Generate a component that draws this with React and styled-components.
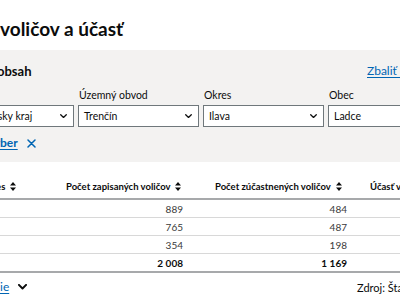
import React from 'react';
import styled, { createGlobalStyle } from 'styled-components';

const GlobalStyle = createGlobalStyle`
  html, body {
    margin: 0;
    padding: 0;
    overflow: hidden;
    background: #fff;
  }
  body {
    font-family: Lato, 'Noto Sans', sans-serif;
    color: #0b0c0c;
  }
`;

const Page = styled.div`
  width: 640px;
`;

// keeps the start of a word off-screen to the left, as the crop does
const Cut = styled.span`
  display: inline-flex;
  justify-content: flex-end;
  width: 0;
  white-space: pre;
`;

const Title = styled.h1`
  margin: 17px 0 9px;
  font-size: 19px;
  line-height: 24px;
  font-weight: 700;
`;

const Panel = styled.section`
  background: #f3f2f1;
  padding: 13px 0 11px;
`;

const PanelHead = styled.div`
  display: grid;
  grid-template-columns: 367px auto;
  align-items: center;
  height: 16px;
`;

const PanelTitle = styled.h2`
  margin: 0 0 0 -3px;
  font-size: 13px;
  line-height: 16px;
  font-weight: 700;
`;

const TextLink = styled.a`
  color: #0065b3;
  text-decoration: underline;
  text-underline-offset: 2px;
  font-size: 12px;
  line-height: 16px;
  font-weight: ${(p) => (p.$bold ? 700 : 400)};
  white-space: nowrap;
`;

const Filters = styled.div`
  display: grid;
  grid-template-columns: repeat(4, 121px);
  column-gap: 4px;
  margin: 9px 0 0 -47px;
`;

const Field = styled.div`
  display: flex;
  flex-direction: column;
  gap: 2px;
`;

const Label = styled.span`
  font-size: 10.5px;
  line-height: 15px;
  padding-left: 1px;
`;

const Select = styled.div`
  height: 22px;
  box-sizing: border-box;
  border: 1px solid #6f777b;
  background: #fff;
  display: flex;
  align-items: center;
  justify-content: space-between;
  padding: 0 6px 0 5px;
  font-size: 10.5px;
  white-space: nowrap;
`;

const Clear = styled.div`
  display: flex;
  align-items: center;
  gap: 9px;
  height: 16px;
  margin-top: 8px;
`;

const Table = styled.div`
  margin: 12px 0 0 -28px;
`;

const Row = styled.div`
  display: grid;
  grid-template-columns: 86px 149px 155px 160px;
  height: ${(p) => (p.$head ? 24 : 17)}px;
  border-bottom: ${(p) =>
    p.$strong ? '2px solid #a7a9ab' : '1px solid #d8d8d8'};
  font-size: 10px;
`;

const HeadCell = styled.div`
  display: flex;
  align-items: center;
  gap: 5px;
  padding-left: 8px;
  font-size: 9.5px;
  font-weight: 700;
  white-space: nowrap;
`;

const Cell = styled.div`
  display: flex;
  align-items: center;
  justify-content: flex-end;
  padding-right: ${(p) => p.$pad || 0}px;
  color: ${(p) => (p.$bold ? '#0b0c0c' : '#3a3a3a')};
  font-weight: ${(p) => (p.$bold ? 700 : 400)};
`;

const Footer = styled.div`
  display: grid;
  grid-template-columns: 357px auto;
  align-items: center;
  height: 16px;
  margin-top: 6px;
`;

const More = styled.div`
  display: flex;
  align-items: center;
  gap: 9px;
`;

const Source = styled.span`
  font-size: 11px;
  white-space: nowrap;
`;

const Chevron = ({ w = 7, color = '#0b0c0c', sw = 1.8 }) => (
  <svg width={w} height={w * 0.6} viewBox="0 0 10 6" fill="none">
    <path d="M1 1l4 4 4-4" stroke={color} strokeWidth={sw} strokeLinecap="round" strokeLinejoin="round" />
  </svg>
);

const Sort = () => (
  <svg width="6" height="9" viewBox="0 0 6 9">
    <path d="M0 3.6L3 0l3 3.6z M0 5.4h6L3 9z" fill="#0b0c0c" />
  </svg>
);

const Close = () => (
  <svg width="9" height="9" viewBox="0 0 9 9">
    <path d="M1 1l7 7M8 1L1 8" stroke="#0065b3" strokeWidth="1.5" strokeLinecap="round" />
  </svg>
);

const filters = [
  { label: 'Kraj', value: 'Trenčiansky kraj' },
  { label: 'Územný obvod', value: 'Trenčín' },
  { label: 'Okres', value: 'Ilava' },
  { label: 'Obec', value: 'Ladce' },
];

const rows = [
  { name: 'Okrsok č. 1', reg: '889', part: '484' },
  { name: 'Okrsok č. 2', reg: '765', part: '487' },
  { name: 'Okrsok č. 3', reg: '354', part: '198' },
];

const App = () => (
  <Page>
    <GlobalStyle />
    <Title>
      <Cut>Počet </Cut>voličov a účasť
    </Title>

    <Panel>
      <PanelHead>
        <PanelTitle>
          <Cut>Filtrovať </Cut>obsah
        </PanelTitle>
        <TextLink href="#">Zbaliť obsah</TextLink>
      </PanelHead>

      <Filters>
        {filters.map((f) => (
          <Field key={f.label}>
            <Label>{f.label}</Label>
            <Select>
              <span>{f.value}</span>
              <Chevron />
            </Select>
          </Field>
        ))}
      </Filters>

      <Clear>
        <TextLink href="#" $bold>
          <Cut>Zrušiť vý</Cut>ber
        </TextLink>
        <Close />
      </Clear>
    </Panel>

    <Table>
      <Row $head $strong>
        <HeadCell>
          Okres <Sort />
        </HeadCell>
        <HeadCell>
          Počet zapisaných voličov <Sort />
        </HeadCell>
        <HeadCell>
          Počet zúčastnených voličov <Sort />
        </HeadCell>
        <HeadCell>
          Účasť voličov v % <Sort />
        </HeadCell>
      </Row>
      {rows.map((r) => (
        <Row key={r.name}>
          <Cell />
          <Cell $pad={24}>{r.reg}</Cell>
          <Cell $pad={15}>{r.part}</Cell>
          <Cell />
        </Row>
      ))}
      <Row $strong>
        <Cell />
        <Cell $pad={24} $bold>2 008</Cell>
        <Cell $pad={15} $bold>1 169</Cell>
        <Cell />
      </Row>
    </Table>

    <Footer>
      <More>
        <TextLink href="#">
          <Cut>Zobraziť podrobné informác</Cut>ie
        </TextLink>
        <Chevron w={9} sw={2.2} />
      </More>
      <Source>Zdroj: Štatistický úrad SR</Source>
    </Footer>
  </Page>
);

export default App;
